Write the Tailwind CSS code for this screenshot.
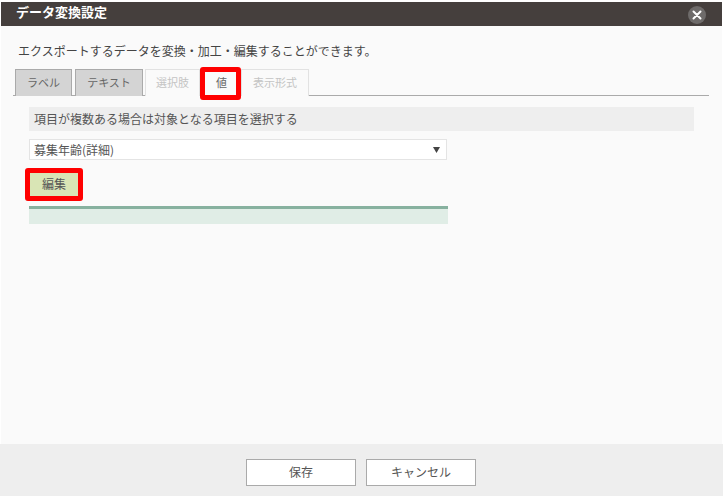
<!DOCTYPE html>
<html lang="ja"><head><meta charset="utf-8"><script src="https://cdn.jsdelivr.net/npm/@tailwindcss/browser@4"></script></head>
<body class="bg-white">
<div class="w-[723px] h-[496px] overflow-hidden pt-[2px] pl-[1px] pr-[1px] flex flex-col bg-white text-[12px] text-[#555] font-['Noto_Sans_CJK_JP','Noto_Sans',sans-serif]">
  <div class="h-[24px] shrink-0 bg-[#453f3d] flex items-center justify-between pl-[15px] pr-[16px]">
    <span class="text-white font-bold text-[13px] leading-[20px] -mt-[4px]">データ変換設定</span>
    <span class="w-[18px] h-[18px] mt-[2px] rounded-full bg-[#6e6b6a] flex items-center justify-center">
      <svg width="10" height="10" viewBox="0 0 10 10"><path d="M1.5 1.5L8.5 8.5M8.5 1.5L1.5 8.5" stroke="#fff" stroke-width="2" stroke-linecap="round"/></svg>
    </span>
  </div>
  <div class="flex-1 bg-[#fafafa] flex flex-col">
    <p class="mt-[16px] ml-[17px] h-[18px] leading-[18px] text-[#444]">エクスポートするデータを変換・加工・編集することができます。</p>
    <div class="mt-[9px] ml-[12px] w-[696px] h-[27px] border-b border-[#aaa] flex items-end pl-[2px] text-[11px]">
      <div class="w-[57px] h-[27px] -mb-px mr-[3px] pb-[1px] bg-[#d4d4d4] border border-b-0 border-[#aaa] flex items-center justify-center text-[#666]">ラベル</div>
      <div class="w-[68px] h-[27px] -mb-px mr-[2px] pb-[1px] bg-[#d4d4d4] border border-b-0 border-[#aaa] flex items-center justify-center text-[#666]">テキスト</div>
      <div class="w-[55px] h-[27px] -mb-px pb-[1px] bg-[#fafafa] border border-b-0 border-[#e2e2e2] flex items-center justify-center text-[#c4c4c4]">選択肢</div>
      <div class="relative w-[41px] h-[27px] -mb-px pb-[1px] pl-[2px] bg-[#fafafa] flex items-center justify-center text-[#666]">値
        <span class="absolute left-0 top-[-2px] w-[41px] h-[33px] border-[5px] border-[#ff0000] rounded-[3px]"></span>
      </div>
      <div class="w-[68px] h-[27px] -mb-px pb-[1px] bg-[#fafafa] border border-b-0 border-[#e2e2e2] flex items-center justify-center text-[#c4c4c4]">表示形式</div>
    </div>
    <div class="mt-[11px] ml-[28px] w-[665px] h-[24px] bg-[#eeeeee] flex items-center pl-[5px] text-[#555]">項目が複数ある場合は対象となる項目を選択する</div>
    <div class="mt-[8px] ml-[28px] w-[418px] h-[21px] bg-white border border-[#e4e4e4] flex items-center justify-between pl-[4px] pr-[6px] text-[#555]">
      <span>募集年齢(詳細)</span>
      <svg width="7" height="6" viewBox="0 0 7 6"><path d="M0 0H7L3.5 6Z" fill="#444"/></svg>
    </div>
    <div class="relative mt-[13px] ml-[29px] w-[48px] h-[24px] pb-[1px] bg-[#d9e5b5] border-b border-[#7fa83c] flex items-center justify-center text-[#555]">編集
      <span class="absolute left-[-5px] top-[-5px] w-[58px] h-[33px] border-[5px] border-[#ff0000] rounded-[3px]"></span>
    </div>
    <div class="mt-[9px] ml-[28px] w-[419px] h-[18px] bg-[#e0ede6] border-t-[3px] border-[#87b19f]"></div>
    <div class="flex-1"></div>
  </div>
  <div class="-mx-[1px] h-[52px] shrink-0 bg-[#eeeeee] flex items-start justify-center gap-[10px] pt-[15px] pr-[1px]">
    <div class="w-[110px] h-[27px] pb-[2px] bg-white border border-[#aaa] flex items-center justify-center text-[#555]">保存</div>
    <div class="w-[110px] h-[27px] pb-[2px] bg-white border border-[#aaa] flex items-center justify-center text-[#555]">キャンセル</div>
  </div>
</div>
</body></html>
